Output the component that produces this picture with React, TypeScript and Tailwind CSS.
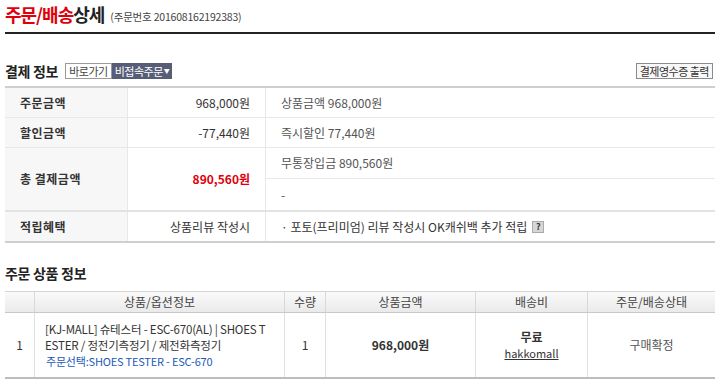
import React from "react";

const font = { fontFamily: '"Noto Sans CJK KR", "Liberation Sans", sans-serif' };

export default function App() {
  return (
    <div className="w-[720px] h-[388px] bg-white overflow-hidden px-[5px] text-[#333]" style={font}>
      {/* Header */}
      <div className="h-[34px] border-b-2 border-[#222] flex items-end pb-[9px] gap-[6px]">
        <div className="text-[18px] font-bold leading-none tracking-[-1px]">
          <span className="text-[#e0000b]">주문/배송</span>
          <span className="text-[#222]">상세</span>
        </div>
        <div className="text-[10.5px] leading-none text-[#444] pb-[1px] tracking-[-0.2px]">(주문번호 201608162192383)</div>
      </div>

      {/* Payment info header */}
      <div className="mt-[28px] h-[17px] flex items-center justify-between">
        <div className="flex items-center">
          <div className="text-[14px] font-bold leading-none text-[#222] tracking-[-0.3px]">결제 정보</div>
          <div className="ml-[7px] flex items-center h-[16px]">
            <div className="h-[16px] px-[3px] border border-[#9a9a9a] bg-white text-[11px] leading-[14px] text-[#444] tracking-[-0.5px]">바로가기</div>
            <div className="h-[16px] px-[3px] bg-[#585d77] text-[11px] leading-[16px] text-white tracking-[-0.5px] flex items-center">
              비접속주문
              <span className="ml-[1px] text-[6px]">▼</span>
            </div>
          </div>
        </div>
        <div className="h-[16px] px-[3px] mr-[2px] border border-[#8a8a8a] bg-[#f8f8f8] text-[11px] leading-[14px] text-[#333] tracking-[-0.5px]">결제영수증 출력</div>
      </div>

      {/* Payment table */}
      <div className="mt-[7px] border-t-2 border-[#cfcfcf] text-[12px]">
        <div className="grid grid-cols-[123px_138px_1fr] h-[30px] border-b border-[#e8e8e8]">
          <div className="bg-[#f7f7f7] border-r border-[#e8e8e8] flex items-center pl-[15px] font-bold text-[#333] tracking-[0.5px]">주문금액</div>
          <div className="border-r border-[#e8e8e8] flex items-center justify-end pr-[15px] text-[#333]">968,000원</div>
          <div className="flex items-center pl-[15px] text-[#555]">상품금액 968,000원</div>
        </div>
        <div className="grid grid-cols-[123px_138px_1fr] h-[30px] border-b border-[#e8e8e8]">
          <div className="bg-[#f7f7f7] border-r border-[#e8e8e8] flex items-center pl-[15px] font-bold text-[#333] tracking-[0.5px]">할인금액</div>
          <div className="border-r border-[#e8e8e8] flex items-center justify-end pr-[15px] text-[#333]">-77,440원</div>
          <div className="flex items-center pl-[15px] text-[#555]">즉시할인 77,440원</div>
        </div>
        <div className="grid grid-cols-[123px_138px_1fr] h-[62px]">
          <div className="bg-[#f7f7f7] border-r border-[#e8e8e8] flex items-center pl-[15px] font-bold text-[#333] tracking-[0.5px]">총 결제금액</div>
          <div className="border-r border-[#e8e8e8] flex items-center justify-end pr-[15px] font-bold text-[#e0000b]">890,560원</div>
          <div className="flex flex-col">
            <div className="h-[31px] border-b border-[#e8e8e8] flex items-center pl-[15px] text-[#555]">무통장입금 890,560원</div>
            <div className="flex-1 flex items-center pl-[15px] text-[#555]">-</div>
          </div>
        </div>
        <div className="grid grid-cols-[123px_138px_1fr] h-[33px] border-t-2 border-[#e3e3e3] border-b-2 border-b-[#cfcfcf]">
          <div className="bg-[#f7f7f7] border-r border-[#e8e8e8] flex items-center pl-[15px] font-bold text-[#333] tracking-[0.5px]">적립혜택</div>
          <div className="border-r border-[#e8e8e8] flex items-center justify-end pr-[15px] text-[#333]">상품리뷰 작성시</div>
          <div className="flex items-center pl-[15px] text-[#333]">
            <span>· 포토(프리미엄) 리뷰 작성시 OK캐쉬백 추가 적립</span>
            <span className="ml-[5px] w-[12px] h-[12px] bg-[#d6d6d6] border border-[#aaa] text-[9px] leading-[10px] font-bold text-[#333] flex items-center justify-center">?</span>
          </div>
        </div>
      </div>

      {/* Product info */}
      <div className="mt-[23px] text-[14px] font-bold leading-none text-[#222] tracking-[-0.3px]">주문 상품 정보</div>
      <div className="mt-[11px] text-[12px]">
        <div className="grid grid-cols-[30px_250px_41px_150px_112px_1fr] h-[22px] border-t border-[#d5d5d5] border-b border-b-[#c8c8c8] bg-gradient-to-b from-[#fafafa] to-[#eaeaea] text-[#444]">
          <div className="border-r border-[#d8d8d8]"></div>
          <div className="border-r border-[#d8d8d8] flex items-center justify-center">상품/옵션정보</div>
          <div className="border-r border-[#d8d8d8] flex items-center justify-center">수량</div>
          <div className="border-r border-[#d8d8d8] flex items-center justify-center">상품금액</div>
          <div className="border-r border-[#d8d8d8] flex items-center justify-center">배송비</div>
          <div className="flex items-center justify-center">주문/배송상태</div>
        </div>
        <div className="grid grid-cols-[30px_250px_41px_150px_112px_1fr] h-[66px] border-b-2 border-[#bdbdbd] text-[#333]">
          <div className="border-r border-[#e0e0e0] flex items-center justify-center">1</div>
          <div className="border-r border-[#e0e0e0] flex flex-col justify-center pl-[10px] leading-[16px] text-[11.5px] tracking-[-0.2px]">
            <div>[KJ-MALL] 슈테스터 - ESC-670(AL) | SHOES T</div>
            <div>ESTER / 정전기측정기 / 제전화측정기</div>
            <div className="pl-[1px] text-[11px] text-[#2357b8]">주문선택:SHOES TESTER - ESC-670</div>
          </div>
          <div className="border-r border-[#e0e0e0] flex items-center justify-center">1</div>
          <div className="border-r border-[#e0e0e0] flex items-center justify-center font-bold">968,000원</div>
          <div className="border-r border-[#e0e0e0] flex flex-col items-center justify-center leading-[16px]">
            <div className="font-bold">무료</div>
            <div className="underline text-[11px]">hakkomall</div>
          </div>
          <div className="flex items-center justify-center text-[#555]">구매확정</div>
        </div>
      </div>
    </div>
  );
}
